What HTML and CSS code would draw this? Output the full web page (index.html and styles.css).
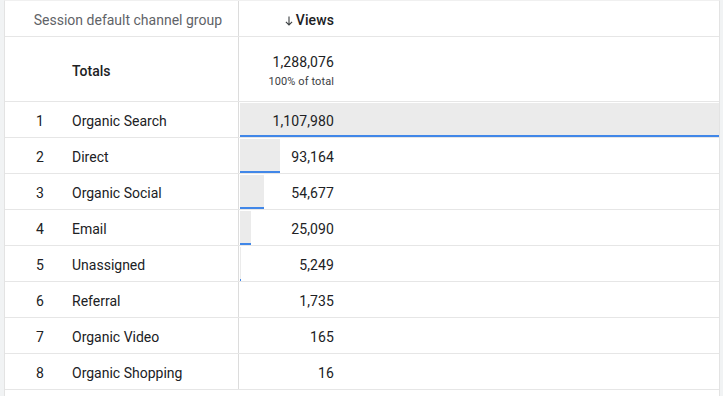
FILE: index.html
```html
<!DOCTYPE html>
<html>
<head>
<meta charset="utf-8">
<link rel="stylesheet" href="styles.css">
</head>
<body>
<div class="table">
  <div class="row head">
    <div class="dim-head">Session default channel group</div>
    <div class="val-cell"><div class="val head-val"><svg class="arrow" width="8" height="10" viewBox="0 0 8 10"><path d="M4 0.5V9M0.9 5.9L4 9L7.1 5.9" fill="none" stroke="#3c4043" stroke-width="1.1"/></svg>Views</div></div>
  </div>
  <div class="row totals">
    <div class="dim"><span class="rank"></span><span class="name strong">Totals</span></div>
    <div class="val-cell"><div class="val total-val"><div class="big">1,288,076</div><div class="small">100% of total</div></div></div>
  </div>
  <div class="row data">
    <div class="dim"><span class="rank">1</span><span class="name">Organic Search</span></div>
    <div class="val-cell"><div class="bar" style="width:100%"></div><div class="val">1,107,980</div></div>
  </div>
  <div class="row data">
    <div class="dim"><span class="rank">2</span><span class="name">Direct</span></div>
    <div class="val-cell"><div class="bar" style="width:8.41%"></div><div class="val">93,164</div></div>
  </div>
  <div class="row data">
    <div class="dim"><span class="rank">3</span><span class="name">Organic Social</span></div>
    <div class="val-cell"><div class="bar" style="width:4.93%"></div><div class="val">54,677</div></div>
  </div>
  <div class="row data">
    <div class="dim"><span class="rank">4</span><span class="name">Email</span></div>
    <div class="val-cell"><div class="bar" style="width:2.2%"></div><div class="val">25,090</div></div>
  </div>
  <div class="row data">
    <div class="dim"><span class="rank">5</span><span class="name">Unassigned</span></div>
    <div class="val-cell"><div class="bar" style="width:1px"></div><div class="val">5,249</div></div>
  </div>
  <div class="row data">
    <div class="dim"><span class="rank">6</span><span class="name">Referral</span></div>
    <div class="val-cell"><div class="val">1,735</div></div>
  </div>
  <div class="row data">
    <div class="dim"><span class="rank">7</span><span class="name">Organic Video</span></div>
    <div class="val-cell"><div class="val">165</div></div>
  </div>
  <div class="row data">
    <div class="dim"><span class="rank">8</span><span class="name">Organic Shopping</span></div>
    <div class="val-cell"><div class="val">16</div></div>
  </div>
</div>
</body>
</html>
```
FILE: styles.css
```css
html, body {
  margin: 0;
  padding: 0;
}
body {
  background: #f1f3f4;
  font-family: Roboto, "Liberation Sans", sans-serif;
  color: #202124;
  font-size: 14px;
  height: 396px;
  overflow: hidden;
}
.table {
  margin: 0 3px 0 4px;
  background: #fff;
  border-left: 1px solid #e3e3e3;
  border-right: 1px solid #e3e3e3;
  border-top: 1px solid #f0f0f0;
  height: 400px;
}
.row {
  display: grid;
  grid-template-columns: 234px 1fr;
  border-bottom: 1px solid #e6e6e6;
  box-sizing: border-box;
}
.row > div:first-child {
  border-right: 1px solid #dcdcdc;
}
.head {
  height: 36px;
}
.dim-head {
  display: flex;
  align-items: center;
  justify-content: flex-end;
  padding: 3px 16px 0 0;
  color: #5f6368;
  font-size: 14px;
}
.val-cell {
  position: relative;
  display: flex;
  align-items: center;
}
.val {
  position: relative;
  width: 95px;
  text-align: right;
  letter-spacing: 0.1px;
  padding-top: 3px;
}
.head-val {
  font-weight: 500;
  display: flex;
  justify-content: flex-end;
  align-items: center;
  gap: 3px;
}
.arrow {
  display: block;
  margin-top: 1px;
}
.totals {
  height: 65px;
}
.dim {
  display: flex;
  align-items: center;
  padding-top: 3px;
}
.rank {
  width: 36px;
  padding-left: 31px;
}
.strong {
  font-weight: 500;
}
.total-val {
  padding-top: 6px;
}
.big {
  line-height: 20px;
  font-size: 14px;
}
.small {
  font-size: 11px;
  line-height: 20px;
  color: #3c4043;
}
.data {
  height: 36px;
}
.bar {
  position: absolute;
  left: 1px;
  top: 1px;
  bottom: 0;
  background: #ebebeb;
  border-bottom: 2px solid #4187e8;
  max-width: calc(100% - 1px);
}
```
